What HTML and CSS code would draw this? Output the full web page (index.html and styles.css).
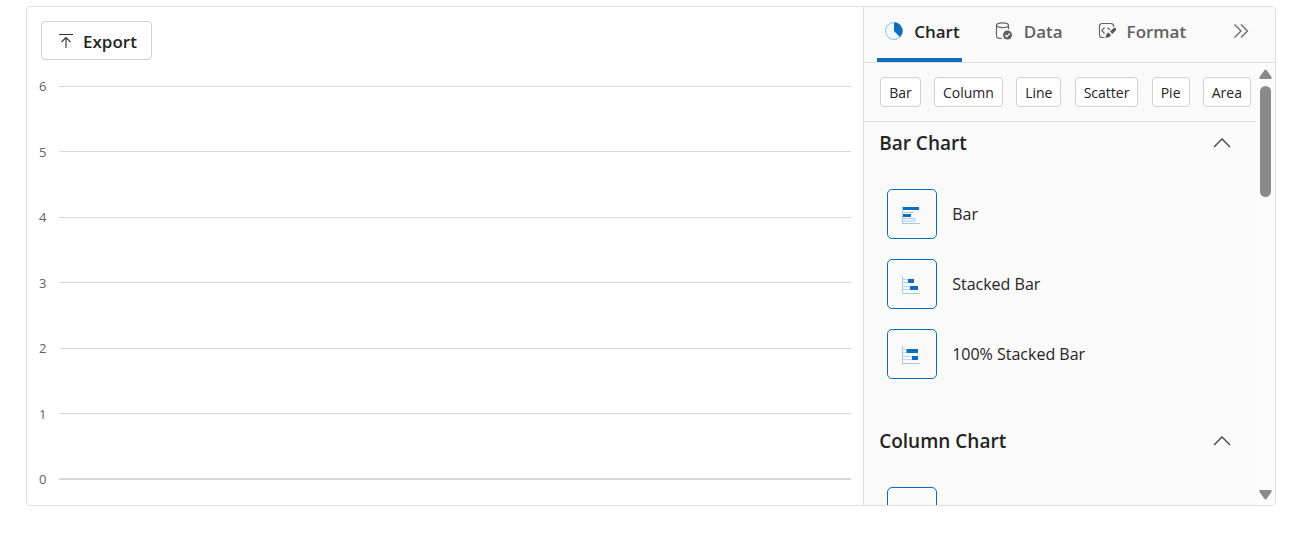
FILE: index.html
```html
<!DOCTYPE html>
<html lang="en">
<head>
  <meta charset="UTF-8">
  <meta name="viewport" content="width=device-width, initial-scale=1.0">
  <title>Chart Wizard</title>
  <link rel="stylesheet" href="styles.css">
</head>
<body>
  <div class="wizard">
    <!-- Chart area -->
    <main class="chart-area">
      <div class="toolbar">
        <button type="button" class="export-btn">
          <svg width="16" height="16" viewBox="0 0 16 16" fill="none" stroke="#333" stroke-width="1.1"><path d="M1 1.5h14M8 15V4.5M3.5 9L8 4.5 12.5 9"/></svg>
          Export
        </button>
      </div>
      <div class="plot">
        <div class="tick"><span>6</span></div>
        <div class="tick"><span>5</span></div>
        <div class="tick"><span>4</span></div>
        <div class="tick"><span>3</span></div>
        <div class="tick"><span>2</span></div>
        <div class="tick"><span>1</span></div>
        <div class="tick axis"><span>0</span></div>
      </div>
    </main>

    <!-- Property panel -->
    <aside class="panel">
      <div class="tabs" role="tablist">
        <button type="button" class="tab active" role="tab" aria-selected="true">
          <svg width="18" height="18" viewBox="0 0 18 18"><circle cx="9" cy="9" r="8.5" fill="#eff9ff" stroke="#7baeda" stroke-width=".8"/><path d="M9 0.5a8.5 8.5 0 0 1 6 14.5L9 9z" fill="#0f6cbd"/></svg>
          Chart
        </button>
        <button type="button" class="tab" role="tab" aria-selected="false">
          <svg width="18" height="18" viewBox="0 0 18 18" fill="none" stroke="#666" stroke-width="1.2"><ellipse cx="7.5" cy="3.2" rx="6" ry="2.4"/><path d="M1.500 3.200v11c0 1.300 2.500 2.300 5.500 2.300M13.500 3.200v4"/><circle cx="12.500" cy="13" r="4.500" fill="#616161" stroke="none"/><path d="M10.300 13l1.600 1.600 2.900-3.200" stroke="#fff"/></svg>
          Data
        </button>
        <button type="button" class="tab" role="tab" aria-selected="false">
          <svg width="18" height="18" viewBox="0 0 18 18" fill="none" stroke="#666" stroke-width="1.2"><path d="M15.500 5V4a2.500 2.500 0 0 0-2.500-2.500H4A2.500 2.500 0 0 0 1.500 4v9A2.500 2.500 0 0 0 4 15.500h2.500M6.500 5.500L3.800 8.500l2.700 3M9.500 5.500L12 8"/><path d="M8.500 12l2-1.500 2.500 2.500-1.500 2-4 1zM12 9.500l3.500-3.300a1.500 1.500 0 0 1 2.200 2.200L14.400 12z" fill="#555" stroke="none"/></svg>
          Format
        </button>
        <button type="button" class="collapse-btn" aria-label="Collapse panel">
          <svg width="16" height="16" viewBox="0 0 16 16" fill="none" stroke="#616161" stroke-width="1.200"><path d="M1.500 1.500L8 8l-6.500 6.500M8 1.500L14.500 8 8 14.500"/></svg>
        </button>
      </div>

      <div class="panel-body">
        <div class="panel-content">
          <div class="chips">
            <button type="button" class="chip">Bar</button>
            <button type="button" class="chip">Column</button>
            <button type="button" class="chip">Line</button>
            <button type="button" class="chip">Scatter</button>
            <button type="button" class="chip">Pie</button>
            <button type="button" class="chip">Area</button>
          </div>

          <section class="group">
            <button type="button" class="group-header" aria-expanded="true">
              Bar Chart
              <svg width="18" height="10" viewBox="0 0 18 10" fill="none" stroke="#424242" stroke-width="1.300"><path d="M1 9l8-8 8 8"/></svg>
            </button>
            <div class="types">
              <button type="button" class="type">
                <span class="thumb"><svg width="18" height="18" viewBox="0 0 18 18"><path d="M.5 0v17.500M0 17.500h18" stroke="#a9c8e4" fill="none"/><path d="M1 6.500h10.500M1 12.500h12v2.500H1" stroke="#a9c8e4" fill="none"/><path d="M1 1h16v3H1zM1 8h8v3H1z" fill="#0f6cbd"/></svg></span>
                Bar
              </button>
              <button type="button" class="type">
                <span class="thumb"><svg width="18" height="18" viewBox="0 0 18 18"><path d="M.5 0v17.500M0 17.500h18" stroke="#a9c8e4" fill="none"/><path d="M1 3.500h5v3H1M1 10.500h7v3H1" stroke="#bdd7ee" fill="none"/><path d="M6 3h6v4H6zM8 10h8v4H8z" fill="#0f6cbd"/></svg></span>
                Stacked Bar
              </button>
              <button type="button" class="type">
                <span class="thumb"><svg width="18" height="18" viewBox="0 0 18 18"><path d="M.5 0v17.500M0 17.500h18" stroke="#a9c8e4" fill="none"/><path d="M1 3.500h4v3H1M1 10.500h9v3H1" stroke="#bdd7ee" fill="none"/><path d="M4.500 3H16v4H4.500zM10 10h6v4h-6z" fill="#0f6cbd"/></svg></span>
                100% Stacked Bar
              </button>
            </div>
          </section>

          <section class="group">
            <button type="button" class="group-header" aria-expanded="true">
              Column Chart
              <svg width="18" height="10" viewBox="0 0 18 10" fill="none" stroke="#424242" stroke-width="1.300"><path d="M1 9l8-8 8 8"/></svg>
            </button>
            <div class="types">
              <button type="button" class="type" aria-label="Column chart type">
                <span class="thumb"></span>
              </button>
            </div>
          </section>
        </div>

        <div class="scrollbar" aria-hidden="true">
          <svg width="13" height="10" viewBox="0 0 13 10" fill="#8a8a8a"><path d="M5.500 1q1-1 2 0l5 7q.8 2-1 2h-10q-1.800 0-1-2z"/></svg>
          <div class="thumb-track"><div class="scroll-thumb"></div></div>
          <svg width="13" height="10" viewBox="0 0 13 10" fill="#8a8a8a"><path d="M5.500 9q1 1 2 0l5-7q.8-2-1-2h-10q-1.800 0-1 2z"/></svg>
        </div>
      </div>
    </aside>
  </div>
</body>
</html>
```
FILE: styles.css
```css
* {
  box-sizing: border-box;
}

body {
  margin: 0;
  padding: 6px 26px 45px;
  height: 100vh;
  font-family: "Segoe UI", "Open Sans", "Noto Sans", sans-serif;
  color: #242424;
  background: #fff;
}

button {
  font-family: inherit;
  color: inherit;
  background: none;
  border: none;
  padding: 0;
  cursor: pointer;
}

svg {
  flex: none;
}

.wizard {
  display: flex;
  height: 100%;
  border: 1px solid #e0e0e0;
  border-radius: 4px;
  overflow: hidden;
}

/* ===== Chart area ===== */
.chart-area {
  flex: 1;
  display: flex;
  flex-direction: column;
  padding: 14px 12px 16px 12px;
}

.toolbar {
  padding-left: 2px;
}

.export-btn {
  display: flex;
  align-items: center;
  gap: 9px;
  height: 39px;
  padding: 1px 14px 0 16px;
  border: 1px solid #d1d1d1;
  border-radius: 4px;
  background: #fff;
  font-size: 17px;
  font-weight: 600;
}

.plot {
  flex: 1;
  display: flex;
  flex-direction: column;
  justify-content: space-between;
  margin-top: 16px;
}

.tick {
  display: flex;
  align-items: center;
  gap: 13px;
  height: 20px;
  font-size: 13px;
  line-height: 20px;
  color: #616161;
}

.tick::after {
  content: "";
  flex: 1;
  height: 1px;
  background: #d8d8d8;
}

.axis::after {
  height: 2px;
}

/* ===== Panel ===== */
.panel {
  flex: 0 0 33%;
  display: flex;
  flex-direction: column;
  border-left: 1px solid #e0e0e0;
  background: #fafafa;
}

.tabs {
  display: flex;
  height: 56px;
  padding: 0 26px 0 13px;
  border-bottom: 1px solid #e0e0e0;
}

.tab {
  display: flex;
  align-items: center;
  gap: 11px;
  margin-right: 25px;
  padding: 0 2px 3px 8px;
  border-bottom: 4px solid transparent;
  font-size: 17px;
  font-weight: 600;
  color: #616161;
}

.tab.active {
  color: #242424;
  border-bottom-color: #0f6cbd;
}

.collapse-btn {
  margin-left: auto;
  padding-bottom: 8px;
}

.collapse-btn svg {
  display: block;
}

.panel-body {
  flex: 1;
  display: flex;
  min-height: 0;
}

.panel-content {
  flex: 1;
  overflow: hidden;
}

.chips {
  display: flex;
  justify-content: space-between;
  padding: 14px 5px 14px 16px;
  border-bottom: 1px solid #e0e0e0;
}

.chip {
  height: 30px;
  padding: 0 8px;
  border: 1px solid #d1d1d1;
  border-radius: 4px;
  background: #fff;
  font-size: 14px;
}

.group {
  padding: 0 25px 18px 15px;
}

.group-header {
  display: flex;
  align-items: center;
  justify-content: space-between;
  width: 100%;
  height: 42px;
  font-size: 19px;
  font-weight: 600;
}

.types {
  display: flex;
  flex-direction: column;
  gap: 20px;
  padding: 25px 8px 23px;
}

.type {
  display: flex;
  align-items: center;
  gap: 15px;
  font-size: 16px;
}

.thumb {
  display: flex;
  align-items: center;
  justify-content: center;
  width: 50px;
  height: 50px;
  padding: 2px 2px 0 0;
  border: 1px solid #0f6cbd;
  border-radius: 5px;
}

.scrollbar {
  flex: 0 0 19px;
  display: flex;
  flex-direction: column;
  align-items: center;
  gap: 7px;
  padding: 6px 1px 5px 0;
  background: #fcfcfc;
}

.thumb-track {
  flex: 1;
}

.scroll-thumb {
  width: 11px;
  height: 28%;
  border-radius: 6px;
  background: #8a8a8a;
}
```
